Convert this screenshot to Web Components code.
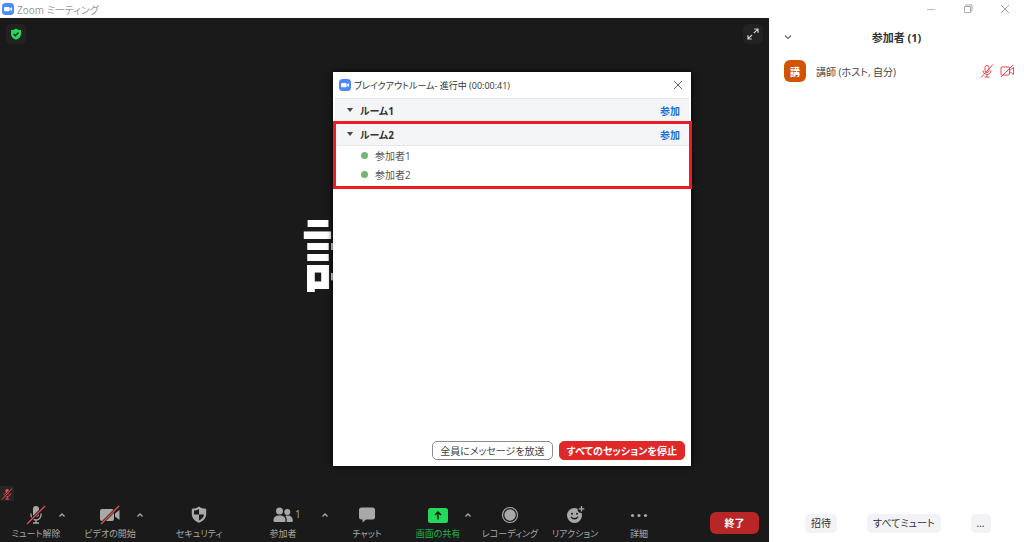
<!DOCTYPE html>
<html lang="ja">
<head>
<meta charset="utf-8">
<meta name="viewport" content="width=device-width, initial-scale=1">
<title>Zoom ミーティング</title>
<style>
  html, body {
    height: 100%;
    margin: 0;
  }

  body {
    font-family: "Open Sans", "Noto Sans CJK JP", sans-serif;
    font-size: 10px;
    font-feature-settings: "palt";
    overflow: hidden;
    background: #fff;
    color: #444;
  }
</style>
</head>
<body>
<meeting-window></meeting-window>

<script>
const ICONS = {
  logo: `<svg width="12" height="12" viewBox="0 0 12 12"><rect width="12" height="12" rx="3.5" fill="#4a8cff"/><rect x="2" y="4" width="5.6" height="4.2" rx="1" fill="#fff"/><path d="M8 5.6 10 4.2v3.8L8 6.7z" fill="#fff"/></svg>`,
  shield: `<svg width="12" height="12" viewBox="0 0 12 12"><path d="M6 .4C7.500 1.600 9 2 11 2v4c0 2.800-2 4.600-5 5.700C3 10.600 1 8.800 1 6V2c2 0 3.500-.4 5-1.600z" fill="#23d959"/><path d="m3.700 6 1.700 1.700L8.500 4.500" fill="none" stroke="#1a1a1a" stroke-width="1.300"/></svg>`,
  expand: `<svg width="12" height="12" viewBox="0 0 12 12" fill="none" stroke="#d0d0d0" stroke-width="1.200"><path d="M6.800 5.200 10.700 1.300M7.200 1h3.800v3.800M5 7 1.300 10.700M1 7.200V11h3.800"/></svg>`,
  minimize: `<svg width="10" height="10" viewBox="0 0 10 10"><path d="M1 5.500h8" stroke="#bbb"/></svg>`,
  restore: `<svg width="10" height="10" viewBox="0 0 10 10" fill="none" stroke="#aaa"><path d="M1.500 2.500h6v6h-6zM3 2.500V1h6v6H7.500"/></svg>`,
  close: `<svg width="10" height="10" viewBox="0 0 10 10"><path d="m1 1 8 8M9 1 1 9" stroke="currentColor" stroke-width=".9"/></svg>`,
  chevron: `<svg width="8" height="6" viewBox="0 0 8 6"><path d="m1 1.500 3 3 3-3" fill="none" stroke="#667" stroke-width="1.200"/></svg>`,
  caret: `<svg width="8" height="6" viewBox="0 0 8 6"><path d="m1.500 4.500 2.500-2.500 2.500 2.500" fill="none" stroke="#aaa" stroke-width="1.300"/></svg>`,
  mic: `<svg width="20" height="20" viewBox="0 0 20 20"><rect x="7" y="1" width="6" height="11" rx="3" fill="#a8a8a8"/><path d="M5 8.500v1.500a5 5 0 0 0 10 0V8.500M10 15v2.500M7 18h6" fill="none" stroke="#a8a8a8" stroke-width="1.300"/><path d="M1 19 19 1" stroke="#1a1a1a" stroke-width="3"/><path d="M1 19 19 1" stroke="#e8504e" stroke-width="1.300"/></svg>`,
  video: `<svg width="20" height="20" viewBox="0 0 20 20"><rect x="0" y="4" width="14" height="12" rx="2" fill="#a8a8a8"/><path d="M15 8.500 19.500 5v10L15 11.500z" fill="#a8a8a8"/><path d="M1 19 19 1" stroke="#1a1a1a" stroke-width="2.600"/><path d="M1 19 19 1" stroke="#e8504e" stroke-width="1.300"/></svg>`,
  security: `<svg width="20" height="20" viewBox="0 0 20 20"><path d="M10 1.500c2 1.600 4.500 2.200 7.200 2.300V9c0 4-2.700 7-7.200 8.700C5.500 16 2.800 13 2.800 9V3.800C5.500 3.700 8 3.100 10 1.500z" fill="#a8a8a8"/><path d="M10 4v5.500H5V5.600C7 5.400 8.500 5 10 4zM10 9.500h5c-.3 2.500-2.200 4.600-5 6z" fill="#1a1a1a"/></svg>`,
  people: `<svg width="20" height="20" viewBox="0 0 20 20" fill="#a8a8a8"><circle cx="6.500" cy="6" r="3.500"/><circle cx="14.300" cy="7" r="3"/><path d="M.5 15.500c0-3.600 2-5 6-5s6 1.400 6 5c0 1-.5 1.500-1.500 1.500H2c-1 0-1.500-.5-1.500-1.500zM13.500 17c.6-2.500.1-4.800-1.300-6 4-1.300 7.600.2 7.600 4.500 0 1-.5 1.500-1.500 1.500z"/></svg>`,
  chat: `<svg width="20" height="20" viewBox="0 0 20 20"><path d="M4.500 2.500h11A2.500 2.500 0 0 1 18 5v7a2.500 2.500 0 0 1-2.500 2.500H9L5.500 17.500v-3h-1A2.500 2.500 0 0 1 2 12V5a2.500 2.500 0 0 1 2.500-2.500z" fill="#a8a8a8"/></svg>`,
  share: `<svg width="20" height="20" viewBox="0 0 20 20"><rect x="0" y="3" width="20" height="15" rx="2.500" fill="#23d959"/><path d="M10 14.500v-7M7 10l3-3 3 3" fill="none" stroke="#1a1a1a" stroke-width="1.500"/></svg>`,
  record: `<svg width="20" height="20" viewBox="0 0 20 20"><circle cx="10" cy="10" r="7.500" fill="none" stroke="#a8a8a8" stroke-width="1.200"/><circle cx="10" cy="10" r="5.700" fill="#a8a8a8"/></svg>`,
  reaction: `<svg width="20" height="20" viewBox="0 0 20 20"><circle cx="9.500" cy="10.500" r="7.500" fill="#a8a8a8"/><circle cx="16.500" cy="4" r="4" fill="#1a1a1a"/><path d="M16.500 1v5.600M13.700 3.800h5.600" stroke="#a8a8a8" stroke-width="1.300"/><circle cx="7" cy="8.800" r="1" fill="#1a1a1a"/><circle cx="12" cy="8.800" r="1" fill="#1a1a1a"/><path d="M6 11.800c1.800 2.600 5.200 2.600 7 0" fill="none" stroke="#1a1a1a" stroke-width="1.300"/></svg>`,
  more: `<svg width="20" height="20" viewBox="0 0 20 20" fill="#a8a8a8"><circle cx="3.500" cy="10.500" r="1.600"/><circle cx="10" cy="10.500" r="1.600"/><circle cx="16.500" cy="10.500" r="1.600"/></svg>`,
  mutedBadge: `<svg width="12" height="12" viewBox="0 0 12 12"><rect x="4.500" y="1" width="3.500" height="6" rx="1.700" fill="#e8504e"/><path d="M3 5.500c0 4 6.500 4 6.500 0M6.200 8.500V11M4.500 11H8" fill="none" stroke="#e8504e"/><path d="m1 11.500 10-11" stroke="#262626" stroke-width="2"/><path d="m1 11.500 10-11" stroke="#e8504e"/></svg>`,
  micOff: `<svg width="14" height="14" viewBox="0 0 14 14" fill="none" stroke="#e8474d"><rect x="5" y="1.500" width="4" height="7" rx="2"/><path d="M3 6.500c0 5.300 8 5.300 8 0M7 10.500v2.500M4.500 13h5M1 13.500 13 .5"/></svg>`,
  videoOff: `<svg width="14" height="14" viewBox="0 0 14 14" fill="none" stroke="#e8474d"><rect x="1" y="3" width="8.500" height="8" rx="1"/><path d="m9.500 6.500 4-3v7l-4-3M1 13 13 1"/></svg>`
};

class UiIcon extends HTMLElement {
  connectedCallback() {
    this.attachShadow({ mode: 'open' });
    this.shadowRoot.innerHTML = `
      <style>
        :host { display: inline-flex; flex: none; }
        svg { display: block; }
      </style>
      ${ICONS[this.getAttribute('name')]}
    `;
  }
}

const BUTTON_RESET = `
  button {
    font: inherit;
    font-feature-settings: inherit;
    color: inherit;
    background: none;
    border: 0;
    margin: 0;
    padding: 0;
    white-space: nowrap;
    cursor: pointer;
  }
`;

class TitleBar extends HTMLElement {
  connectedCallback() {
    this.attachShadow({ mode: 'open' });
    this.shadowRoot.innerHTML = `
      <style>
        ${BUTTON_RESET}
        :host {
          display: flex;
          align-items: center;
          gap: 3px;
          height: 18px;
          padding: 0 14px 0 2px;
          color: #999;
        }
        .title { flex: 1; }
        .controls { display: flex; gap: 27px; }
        .controls button { display: flex; }
      </style>
      <ui-icon name="logo"></ui-icon>
      <span class="title">Zoom ミーティング</span>
      <div class="controls">
        <button aria-label="最小化"><ui-icon name="minimize"></ui-icon></button>
        <button aria-label="元に戻す"><ui-icon name="restore"></ui-icon></button>
        <button aria-label="閉じる"><ui-icon name="close"></ui-icon></button>
      </div>
    `;
  }
}

class ToolButton extends HTMLElement {
  connectedCallback() {
    const caret = this.hasAttribute('caret');
    const count = this.getAttribute('count');
    this.attachShadow({ mode: 'open' });
    this.shadowRoot.innerHTML = `
      <style>
        ${BUTTON_RESET}
        :host {
          display: flex;
          justify-content: center;
          position: relative;
          color: #a8a8a8;
          font-size: 9px;
        }
        :host([active]) { color: #20b44c; }
        .tool {
          display: flex;
          flex-direction: column;
          align-items: center;
          line-height: 17px;
        }
        .caret, .count {
          position: absolute;
          top: 7px;
          left: calc(50% + var(--caret, 26px) - 4px);
          display: flex;
        }
        .count {
          top: 1px;
          left: calc(50% + 12px);
          font-size: 10px;
        }
      </style>
      <button class="tool">
        <ui-icon name="${this.getAttribute('icon')}"></ui-icon>
        <slot></slot>
        ${count ? `<span class="count">${count}</span>` : ''}
      </button>
      ${caret ? '<button class="caret" aria-label="オプション"><ui-icon name="caret"></ui-icon></button>' : ''}
    `;
  }
}

class MeetingToolbar extends HTMLElement {
  connectedCallback() {
    this.attachShadow({ mode: 'open' });
    this.shadowRoot.innerHTML = `
      <style>
        ${BUTTON_RESET}
        :host {
          display: flex;
          justify-content: space-between;
          align-items: flex-start;
          padding: 4px 10px 0;
          height: 37px;
        }
        .tools {
          display: grid;
          grid-template-columns: 52px 96px 82px 86px 82px 60px 84px 46px 82px;
        }
        .wide { --caret: 30px; }
        .wider { --caret: 42px; }
        .end {
          width: 49px;
          height: 22px;
          margin-top: 7px;
          border-radius: 6px;
          background: #b92626;
          color: #fff;
          font-weight: 700;
          line-height: 20px;
        }
      </style>
      <div class="tools">
        <tool-button icon="mic" caret>ミュート解除</tool-button>
        <tool-button icon="video" class="wide" caret>ビデオの開始</tool-button>
        <tool-button icon="security">セキュリティ</tool-button>
        <tool-button icon="people" class="wider" count="1" caret>参加者</tool-button>
        <tool-button icon="chat">チャット</tool-button>
        <tool-button icon="share" class="wide" active caret>画面の共有</tool-button>
        <tool-button icon="record">レコーディング</tool-button>
        <tool-button icon="reaction">リアクション</tool-button>
        <tool-button icon="more">詳細</tool-button>
      </div>
      <button class="end">終了</button>
    `;
  }
}

class BreakoutRoom extends HTMLElement {
  connectedCallback() {
    this.attachShadow({ mode: 'open' });
    this.shadowRoot.innerHTML = `
      <style>
        ${BUTTON_RESET}
        :host { display: block; position: relative; }
        header {
          display: flex;
          align-items: center;
          height: 22px;
          margin: 0 2px;
          padding: 0 9px 0 12px;
          background: #f4f5f7;
          border-top: 1px solid #e6e8eb;
          border-bottom: 1px solid #e6e8eb;
          font-weight: 700;
          color: #333;
        }
        .arrow {
          border: 3px solid transparent;
          border-top: 4px solid #444;
          border-bottom: 0;
          margin-right: 7px;
        }
        h3 { flex: 1; margin: 0; font-size: inherit; }
        .join { color: #1d72d4; }
        /* highlight frame drawn over the room */
        :host([highlight])::after {
          content: "";
          position: absolute;
          inset: -1px -1px -5px 0;
          border: 3px solid #ed1c24;
          pointer-events: none;
        }
      </style>
      <header>
        <span class="arrow"></span>
        <h3>${this.getAttribute('name')}</h3>
        <button class="join">参加</button>
      </header>
      <slot></slot>
    `;
  }
}

class RoomMember extends HTMLElement {
  connectedCallback() {
    this.attachShadow({ mode: 'open' });
    this.shadowRoot.innerHTML = `
      <style>
        :host {
          display: flex;
          align-items: center;
          gap: 7px;
          height: 19px;
          padding-left: 28px;
          color: #555;
        }
        i {
          width: 7px;
          height: 7px;
          border-radius: 50%;
          background: #76b576;
        }
      </style>
      <i></i><span><slot></slot></span>
    `;
  }
}

class BreakoutDialog extends HTMLElement {
  connectedCallback() {
    this.attachShadow({ mode: 'open' });
    this.shadowRoot.innerHTML = `
      <style>
        ${BUTTON_RESET}
        :host {
          display: flex;
          flex-direction: column;
          background: #fff;
          box-shadow: 0 0 6px #000;
        }
        .head {
          display: flex;
          align-items: center;
          gap: 3px;
          height: 26px;
          padding: 0 8px 0 6px;
          color: #333;
        }
        h2 { flex: 1; margin: 0; font-size: 9px; font-weight: 400; }
        .close { display: flex; color: #555; }
        .rooms { flex: 1; }
        footer {
          display: flex;
          justify-content: flex-end;
          gap: 6px;
          padding: 0 6px 6px;
        }
        footer button {
          box-sizing: border-box;
          height: 19px;
          padding: 0 7px;
          border: 1px solid #888b90;
          border-radius: 5px;
          line-height: 16px;
        }
        footer .stop {
          border-color: #e02828;
          background: #e02828;
          color: #fff;
          font-weight: 700;
        }
      </style>
      <div class="head">
        <ui-icon name="logo"></ui-icon>
        <h2>ブレイクアウトルーム- 進行中 (00:00:41)</h2>
        <button class="close" aria-label="閉じる"><ui-icon name="close"></ui-icon></button>
      </div>
      <div class="rooms"><slot></slot></div>
      <footer>
        <button>全員にメッセージを放送</button>
        <button class="stop">すべてのセッションを停止</button>
      </footer>
    `;
  }
}

class MeetingStage extends HTMLElement {
  connectedCallback() {
    this.attachShadow({ mode: 'open' });
    this.shadowRoot.innerHTML = `
      <style>
        ${BUTTON_RESET}
        :host {
          display: flex;
          flex-direction: column;
          position: relative;
          background: #1a1a1a;
          min-width: 0;
        }
        .top {
          display: flex;
          justify-content: space-between;
          padding: 6px;
        }
        .chip {
          display: flex;
          align-items: center;
          justify-content: center;
          width: 20px;
          height: 20px;
          border-radius: 5px;
          background: #222;
        }
        .speaker {
          flex: 1;
          display: flex;
          align-items: center;
          justify-content: center;
          padding: 0 10px 26px 0;
          color: #fff;
          font-size: 78px;
          font-weight: 700;
          line-height: 80px;
          font-feature-settings: normal;
        }
        .muted {
          display: flex;
          width: 14px;
          height: 15px;
          align-items: center;
          justify-content: center;
          background: #262626;
        }
        breakout-dialog {
          position: absolute;
          left: 333px;
          top: 54px;
          width: 358px;
          height: 394px;
        }
      </style>
      <div class="top">
        <button class="chip" aria-label="情報"><ui-icon name="shield"></ui-icon></button>
        <button class="chip" aria-label="全画面"><ui-icon name="expand"></ui-icon></button>
      </div>
      <div class="speaker">講師</div>
      <span class="muted"><ui-icon name="mutedBadge"></ui-icon></span>
      <meeting-toolbar></meeting-toolbar>
      <breakout-dialog>
        <breakout-room name="ルーム1"></breakout-room>
        <breakout-room name="ルーム2" highlight>
          <room-member>参加者1</room-member>
          <room-member>参加者2</room-member>
        </breakout-room>
      </breakout-dialog>
    `;
  }
}

class ParticipantPanel extends HTMLElement {
  connectedCallback() {
    this.attachShadow({ mode: 'open' });
    this.shadowRoot.innerHTML = `
      <style>
        ${BUTTON_RESET}
        :host { display: flex; flex-direction: column; }
        header {
          display: grid;
          grid-template-columns: 8px 1fr 8px;
          align-items: center;
          height: 37px;
          padding: 0 15px;
        }
        header button { display: flex; }
        h2 {
          margin: 0;
          font-size: 11px;
          font-weight: 700;
          text-align: center;
          color: #333;
        }
        ul { flex: 1; list-style: none; margin: 0; padding: 0; }
        li {
          display: flex;
          align-items: center;
          gap: 6px;
          height: 32px;
          padding: 0 10px 0 15px;
        }
        .avatar {
          display: flex;
          align-items: center;
          justify-content: center;
          width: 22px;
          height: 22px;
          margin-right: 4px;
          border-radius: 6px;
          background: #d35400;
          color: #fff;
          font-weight: 700;
        }
        .name { flex: 1; color: #444; }
        footer {
          display: flex;
          gap: 30px;
          padding: 0 33px 9px 36px;
        }
        footer button {
          height: 19px;
          padding: 0 6px;
          border-radius: 5px;
          background: #f2f2f7;
          color: #333;
          line-height: 17px;
        }
      </style>
      <header>
        <button aria-label="折りたたむ"><ui-icon name="chevron"></ui-icon></button>
        <h2>参加者 (1)</h2>
      </header>
      <ul>
        <li>
          <span class="avatar">講</span>
          <span class="name">講師 (ホスト, 自分)</span>
          <ui-icon name="micOff"></ui-icon>
          <ui-icon name="videoOff"></ui-icon>
        </li>
      </ul>
      <footer>
        <button>招待</button>
        <button>すべてミュート</button>
        <button>...</button>
      </footer>
    `;
  }
}

class MeetingWindow extends HTMLElement {
  connectedCallback() {
    this.attachShadow({ mode: 'open' });
    this.shadowRoot.innerHTML = `
      <style>
        :host {
          display: grid;
          grid-template: auto 1fr / 1fr 255px;
          height: 100%;
        }
        title-bar { grid-column: 1 / -1; }
      </style>
      <title-bar></title-bar>
      <meeting-stage></meeting-stage>
      <participant-panel></participant-panel>
    `;
  }
}

customElements.define('ui-icon', UiIcon);
customElements.define('title-bar', TitleBar);
customElements.define('tool-button', ToolButton);
customElements.define('meeting-toolbar', MeetingToolbar);
customElements.define('breakout-room', BreakoutRoom);
customElements.define('room-member', RoomMember);
customElements.define('breakout-dialog', BreakoutDialog);
customElements.define('meeting-stage', MeetingStage);
customElements.define('participant-panel', ParticipantPanel);
customElements.define('meeting-window', MeetingWindow);
</script>
</body>
</html>
